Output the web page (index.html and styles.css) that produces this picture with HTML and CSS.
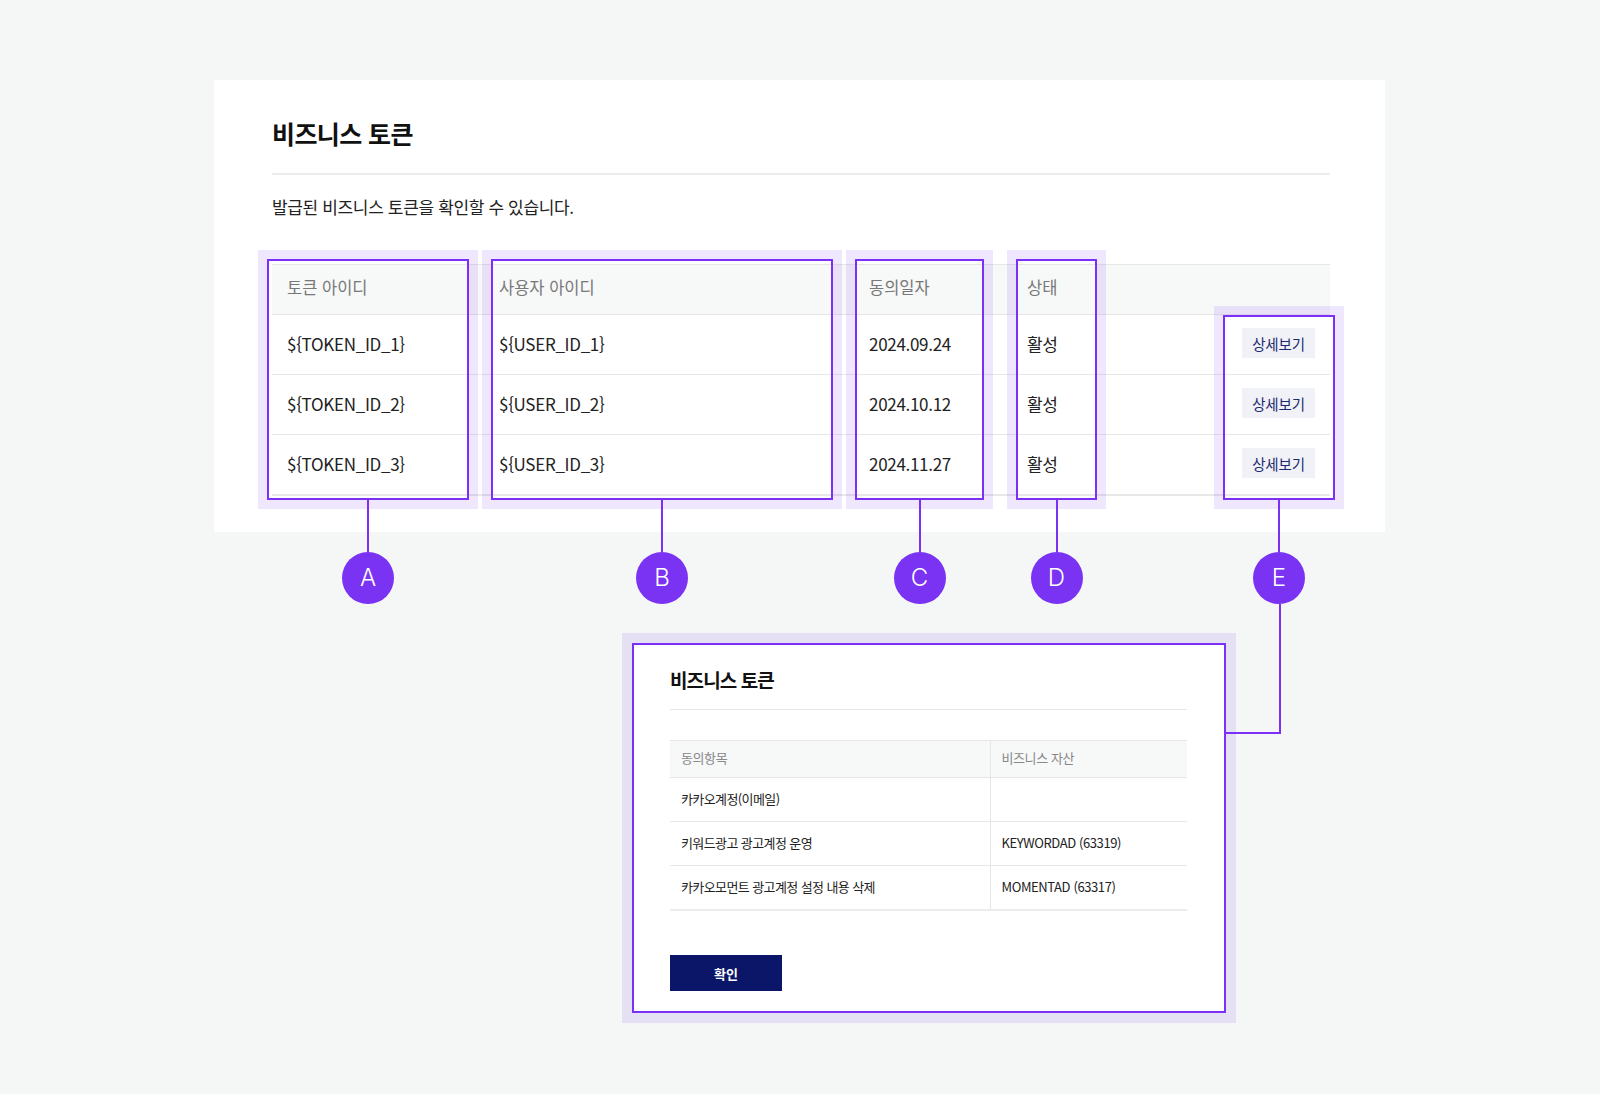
FILE: index.html
```html
<!DOCTYPE html>
<html lang="ko">
<head>
  <meta charset="UTF-8">
  <meta name="viewport" content="width=device-width, initial-scale=1.0">
  <title>비즈니스 토큰</title>
  <link rel="stylesheet" href="styles.css">
</head>
<body>
  <div class="canvas">
    <section class="card">
      <h1 class="card-title">비즈니스 토큰</h1>
      <p class="card-desc">발급된 비즈니스 토큰을 확인할 수 있습니다.</p>
      <table class="token-table">
        <colgroup>
          <col style="width: 212px">
          <col style="width: 370px">
          <col style="width: 158px">
          <col style="width: 150px">
          <col>
        </colgroup>
        <thead>
          <tr><th>토큰 아이디</th><th>사용자 아이디</th><th>동의일자</th><th>상태</th><th></th></tr>
        </thead>
        <tbody>
          <tr>
            <td>${TOKEN_ID_1}</td><td>${USER_ID_1}</td><td>2024.09.24</td><td>활성</td>
            <td class="cell-action"><button class="btn-detail">상세보기</button></td>
          </tr>
          <tr>
            <td>${TOKEN_ID_2}</td><td>${USER_ID_2}</td><td>2024.10.12</td><td>활성</td>
            <td class="cell-action"><button class="btn-detail">상세보기</button></td>
          </tr>
          <tr>
            <td>${TOKEN_ID_3}</td><td>${USER_ID_3}</td><td>2024.11.27</td><td>활성</td>
            <td class="cell-action"><button class="btn-detail">상세보기</button></td>
          </tr>
        </tbody>
      </table>
    </section>

    <!-- annotation markers -->
    <div class="marker marker-a">
      <div class="marker-box"><div class="marker-frame"></div></div>
      <div class="marker-stem"></div>
      <div class="marker-badge">A</div>
    </div>
    <div class="marker marker-b">
      <div class="marker-box"><div class="marker-frame"></div></div>
      <div class="marker-stem"></div>
      <div class="marker-badge">B</div>
    </div>
    <div class="marker marker-c">
      <div class="marker-box"><div class="marker-frame"></div></div>
      <div class="marker-stem"></div>
      <div class="marker-badge">C</div>
    </div>
    <div class="marker marker-d">
      <div class="marker-box"><div class="marker-frame"></div></div>
      <div class="marker-stem"></div>
      <div class="marker-badge">D</div>
    </div>
    <div class="marker marker-e">
      <div class="marker-box"><div class="marker-frame"></div></div>
      <div class="marker-stem"></div>
      <div class="marker-badge">E</div>
    </div>
    <div class="elbow"></div>

    <div class="popup-wrap">
      <div class="popup">
        <h2 class="popup-title">비즈니스 토큰</h2>
        <table class="consent-table">
          <colgroup>
            <col style="width: 320px">
            <col>
          </colgroup>
          <thead>
            <tr><th>동의항목</th><th>비즈니스 자산</th></tr>
          </thead>
          <tbody>
            <tr><td>카카오계정(이메일)</td><td></td></tr>
            <tr><td>키워드광고 광고계정 운영</td><td>KEYWORDAD (63319)</td></tr>
            <tr><td>카카오모먼트 광고계정 설정 내용 삭제</td><td>MOMENTAD (63317)</td></tr>
          </tbody>
        </table>
        <button class="btn-confirm">확인</button>
      </div>
    </div>
  </div>
</body>
</html>
```

FILE: styles.css
```css
body { margin: 0; background: #f5f7f6; font-family: "Noto Sans CJK KR", "Noto Sans", sans-serif; color: #222; }
.canvas { position: relative; padding-top: 80px; padding-bottom: 72px; }

/* main card */
.card { margin-left: 214px; width: 1171px; height: 452px; box-sizing: border-box; padding: 38px 55px 0 58px; background: #fff; }
.card-title { margin: 0; padding-bottom: 24px; border-bottom: 2px solid #ececec; font-size: 25px; line-height: 31px; font-weight: 700; color: #111; letter-spacing: -0.6px; }
.card-desc { margin: 20px 0 0; font-size: 17px; line-height: 24px; letter-spacing: -0.35px; color: #222; }

.token-table { width: 100%; margin-top: 45px; border-collapse: collapse; table-layout: fixed; border-top: 1px solid #e6e6e6; border-bottom: 2px solid #e8e8e8; }
.token-table th { height: 44px; padding: 0 15px 5px; background: #f7f8f8; text-align: left; font-weight: 400; font-size: 16.5px; color: #777; letter-spacing: 0; border-bottom: 1px solid #e6e6e6; }
.token-table td { height: 56px; padding: 0 15px 3px; font-size: 17px; color: #222; letter-spacing: -0.3px; border-bottom: 1px solid #e8e8e8; }
.token-table tr:last-child td { border-bottom: none; }
.token-table td.cell-action { text-align: right; padding-right: 15px; }
.btn-detail { width: 73px; height: 30px; padding: 0; border: none; background: #f1f1f8; color: #1c2a6e; font-family: inherit; font-size: 14.5px; letter-spacing: -0.2px; cursor: pointer; }

/* annotation markers */
.marker { position: absolute; top: 250px; display: flex; flex-direction: column; align-items: center; }
.marker-box { align-self: stretch; height: 259px; box-sizing: border-box; border: 9px solid rgba(124, 58, 237, 0.12); }
.marker-frame { height: 100%; box-sizing: border-box; border: 2px solid #7b2ff7; }
.marker-stem { width: 2px; height: 52px; margin-top: -9px; background: #7b2ff7; }
.marker-badge { width: 52px; height: 52px; border-radius: 50%; background: #7a32f3; color: #fff; font-family: Inter, "Noto Sans", sans-serif; font-size: 24px; font-weight: 300; line-height: 52px; text-align: center; }

.marker-a { left: 258px; width: 220px; }
.marker-b { left: 482px; width: 360px; }
.marker-c { left: 846px; width: 147px; }
.marker-d { left: 1007px; width: 99px; }
.marker-e { left: 1214px; top: 306px; width: 130px; }
.marker-e .marker-box { height: 203px; }

.elbow { position: absolute; left: 1226px; top: 604px; width: 55px; height: 130px; box-sizing: border-box; border-right: 2px solid #7b2ff7; border-bottom: 2px solid #7b2ff7; }

/* detail popup */
.popup-wrap { margin: 101px 0 0 622px; width: 614px; box-sizing: border-box; padding: 10px; background: rgba(124, 58, 237, 0.12); }
.popup { height: 370px; box-sizing: border-box; padding: 22px 37px 0 36px; border: 2px solid #7b2ff7; background: #fff; }
.popup-title { margin: 0; padding-bottom: 16px; border-bottom: 1px solid #e6e6e6; font-size: 19px; line-height: 26px; font-weight: 700; color: #111; letter-spacing: -0.9px; }

.consent-table { width: 100%; margin-top: 30px; border-collapse: collapse; table-layout: fixed; border-top: 1px solid #e6e6e6; border-bottom: 2px solid #ececec; }
.consent-table th { height: 32px; padding: 0 11px 4px; background: #f7f8f8; text-align: left; font-weight: 400; font-size: 13px; color: #888; letter-spacing: -0.4px; border-bottom: 1px solid #e6e6e6; }
.consent-table td { height: 41px; padding: 0 11px 2px; font-size: 13px; color: #222; letter-spacing: -0.6px; border-bottom: 1px solid #e8e8e8; }
.consent-table td + td { letter-spacing: -0.4px; }
.consent-table tr:last-child td { border-bottom: none; }
.consent-table th + th, .consent-table td + td { border-left: 1px solid #e6e6e6; }

.btn-confirm { display: block; margin-top: 44px; width: 112px; height: 36px; border: none; background: #0b1668; color: #fff; font-family: inherit; font-size: 13px; font-weight: 700; cursor: pointer; }
```
